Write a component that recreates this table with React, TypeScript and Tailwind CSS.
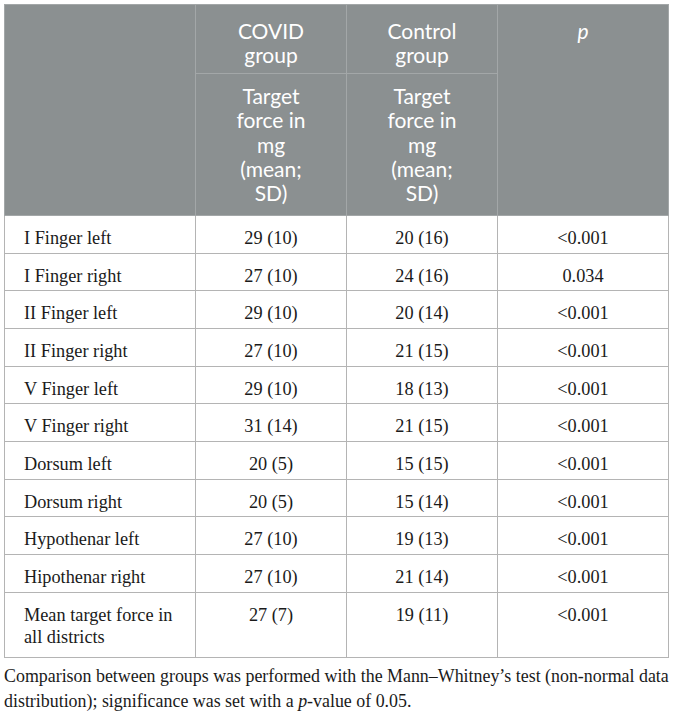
const rows: [string, string, string, string][] = [
  ["I Finger left", "29 (10)", "20 (16)", "<0.001"],
  ["I Finger right", "27 (10)", "24 (16)", "0.034"],
  ["II Finger left", "29 (10)", "20 (14)", "<0.001"],
  ["II Finger right", "27 (10)", "21 (15)", "<0.001"],
  ["V Finger left", "29 (10)", "18 (13)", "<0.001"],
  ["V Finger right", "31 (14)", "21 (15)", "<0.001"],
  ["Dorsum left", "20 (5)", "15 (15)", "<0.001"],
  ["Dorsum right", "20 (5)", "15 (14)", "<0.001"],
  ["Hypothenar left", "27 (10)", "19 (13)", "<0.001"],
  ["Hipothenar right", "27 (10)", "21 (14)", "<0.001"],
  ["Mean target force in all districts", "27 (7)", "19 (11)", "<0.001"],
];

const serif = "font-['Liberation_Serif','Times_New_Roman',serif]";
const sans = "font-['Lato','Open_Sans',sans-serif]";

export default function App() {
  return (
    <div className="w-[674px] h-[715px] bg-white pl-[4px] pt-[4px]">
      <table className="w-[664px] table-fixed border-collapse border border-[#c4c8c4]">
        <colgroup>
          <col className="w-[191px]" />
          <col className="w-[151px]" />
          <col className="w-[151px]" />
          <col className="w-[171px]" />
        </colgroup>
        <thead className={`${sans} bg-[#8b9091] text-white text-[21px] leading-[24.4px]`}>
          <tr>
            <th rowSpan={2} className="border border-[#a3a7a8]"></th>
            <th className="border border-[#a3a7a8] font-normal align-top px-3 pt-[14px] pb-[5px]">
              COVID
              <br />
              group
            </th>
            <th className="border border-[#a3a7a8] font-normal align-top px-3 pt-[14px] pb-[5px]">
              Control
              <br />
              group
            </th>
            <th
              rowSpan={2}
              className="border border-[#a3a7a8] font-normal italic align-top px-3 pt-[14px]"
            >
              p
            </th>
          </tr>
          <tr>
            <th className="border border-[#a3a7a8] font-normal align-top px-3 pt-[10px] pb-[9px]">
              Target
              <br />
              force in
              <br />
              mg
              <br />
              (mean;
              <br />
              SD)
            </th>
            <th className="border border-[#a3a7a8] font-normal align-top px-3 pt-[10px] pb-[9px]">
              Target
              <br />
              force in
              <br />
              mg
              <br />
              (mean;
              <br />
              SD)
            </th>
          </tr>
        </thead>
        <tbody className={`${serif} text-[18.3px] leading-[21.7px] text-[#1a1a1a]`}>
          {rows.map((r, i) => {
            const last = i === rows.length - 1;
            const pad = last ? "pt-[12px] pb-[9px]" : "pt-[12px] pb-[3px]";
            return (
              <tr key={i}>
                <td className={`border border-[#b4b4b4] align-top pl-[19px] pr-2 ${pad}`}>
                  {r[0]}
                </td>
                <td className={`border border-[#b4b4b4] align-top text-center ${pad}`}>{r[1]}</td>
                <td className={`border border-[#b4b4b4] align-top text-center ${pad}`}>{r[2]}</td>
                <td className={`border border-[#b4b4b4] align-top text-center ${pad}`}>{r[3]}</td>
              </tr>
            );
          })}
        </tbody>
      </table>
      <p className={`${serif} text-[17.9px] leading-[25px] text-[#1a1a1a] mt-[6px] w-[670px]`}>
        Comparison between groups was performed with the Mann–Whitney’s test (non-normal data
        distribution); significance was set with a <span className="italic">p</span>-value of 0.05.
      </p>
    </div>
  );
}
